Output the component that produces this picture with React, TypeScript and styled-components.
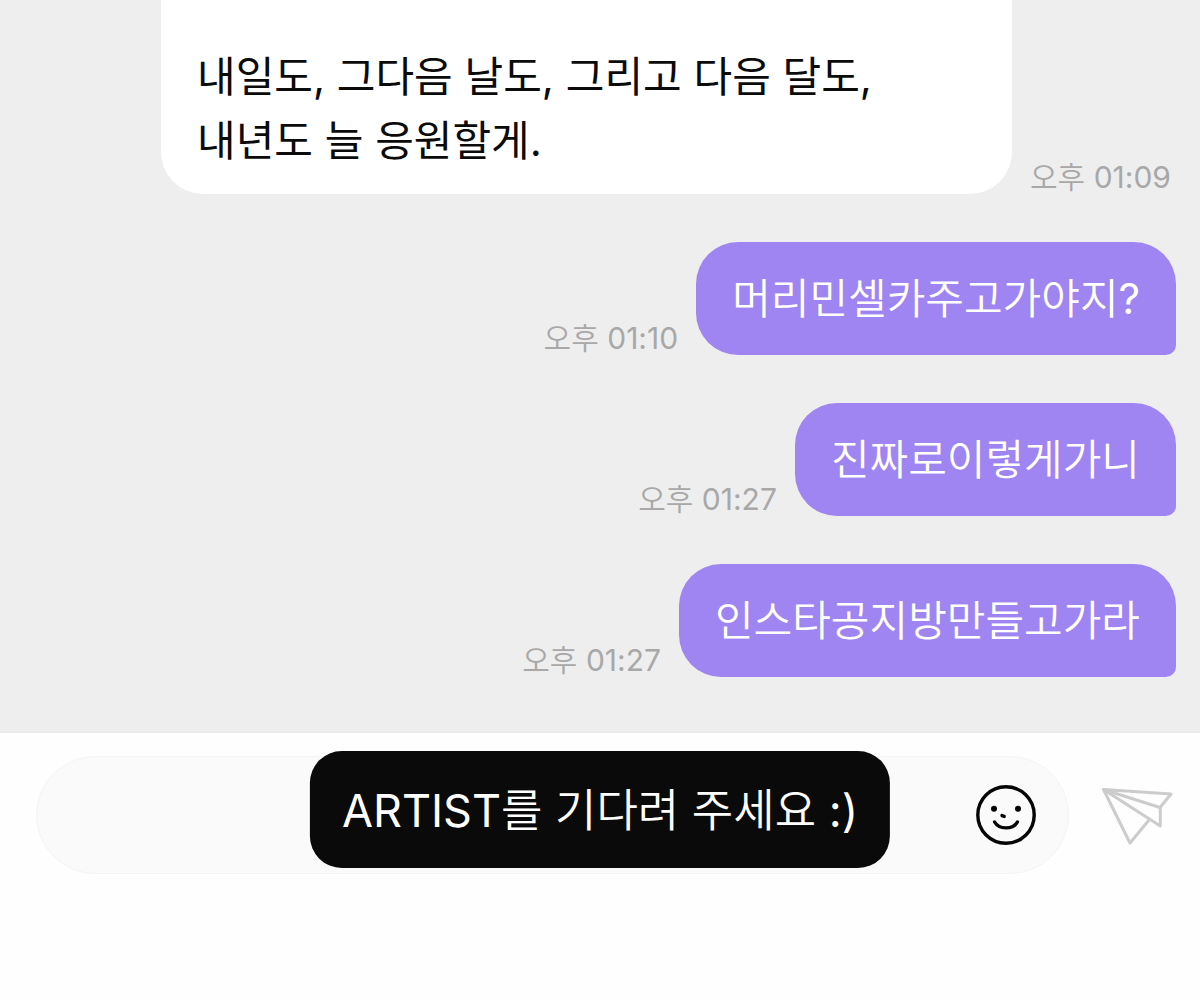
import React from "react";
import styled, { createGlobalStyle } from "styled-components";

const lightHangul = `Inter, "Noto Sans CJK KR DemiLight", "Noto Sans CJK KR", sans-serif`;

const Global = createGlobalStyle`
  *, *::before, *::after { box-sizing: border-box; }
  body {
    margin: 0;
    background: #fefefe;
    font-family: Inter, "Noto Sans CJK KR", sans-serif;
  }
`;

const Page = styled.div`
  display: flex;
  flex-direction: column;
  min-height: 100vh;
`;

const Thread = styled.main`
  display: flex;
  flex-direction: column;
  gap: 48px;
  padding: 0 24px 54px;
  background: #eeeeee;
  border-bottom: 2px solid #ebebeb;
`;

const Row = styled.div<{ $mine?: boolean }>`
  display: flex;
  align-items: flex-end;
  justify-content: ${(p) => (p.$mine ? "flex-end" : "flex-start")};
  gap: 18px;
  padding-left: ${(p) => (p.$mine ? "0" : "137px")};
`;

const Bubble = styled.p<{ $mine?: boolean }>`
  margin: 0;
  font-family: ${(p) => (p.$mine ? lightHangul : "inherit")};
  font-size: 42px;
  line-height: 64px;
  color: ${(p) => (p.$mine ? "#ffffff" : "#0b0b0b")};
  background: ${(p) => (p.$mine ? "#9f85f2" : "#ffffff")};
  border-radius: ${(p) => (p.$mine ? "42px 42px 10px 42px" : "0 0 42px 42px")};
  padding: ${(p) => (p.$mine ? "25px 36px 24px" : "45px 36px 21px")};
  flex: ${(p) => (p.$mine ? "0 1 auto" : "0 1 851px")};
`;

const Time = styled.time`
  flex: none;
  font-family: ${lightHangul};
  font-size: 30px;
  line-height: 34px;
  color: #a8a8a8;
`;

const Composer = styled.form`
  display: flex;
  align-items: center;
  gap: 32px;
  padding: 23px 27px 0 36px;
`;

const Field = styled.div`
  flex: 1;
  display: flex;
  align-items: center;
  height: 118px;
  padding: 0 32px;
  border: 1px solid #f4f4f4;
  border-radius: 59px;
  background: #fafafa;
`;

const Input = styled.input`
  flex: 1;
  min-width: 0;
  height: 100%;
  border: 0;
  outline: 0;
  background: transparent;
  font: inherit;
  font-size: 42px;
`;

const IconButton = styled.button`
  display: flex;
  flex: none;
  padding: 0;
  border: 0;
  background: none;
  color: inherit;
`;

const Dock = styled.footer`
  position: relative;
`;

const Toast = styled.div`
  position: absolute;
  top: 18px;
  left: 50%;
  transform: translateX(-50%);
  padding: 28px 32px 25px;
  border-radius: 32px;
  background: #0a0a0a;
  color: #ffffff;
  font-family: ${lightHangul};
  font-size: 45px;
  line-height: 64px;
  white-space: nowrap;
`;

const messages = [
  { text: "머리민셀카주고가야지?", time: "오후 01:10" },
  { text: "진짜로이렇게가니", time: "오후 01:27" },
  { text: "인스타공지방만들고가라", time: "오후 01:27" },
];

export default function App() {
  return (
    <Page>
      <Global />
      <Thread>
        <Row>
          <Bubble>
            내일도, 그다음 날도, 그리고 다음 달도,
            <br />
            내년도 늘 응원할게.
          </Bubble>
          <Time>오후 01:09</Time>
        </Row>
        {messages.map((m) => (
          <Row $mine key={m.text}>
            <Time>{m.time}</Time>
            <Bubble $mine>{m.text}</Bubble>
          </Row>
        ))}
      </Thread>
      <Dock>
        <Composer>
          <Field>
            <Input type="text" aria-label="메시지" />
            <IconButton type="button" aria-label="이모티콘">
              <svg width="60" height="60" viewBox="0 0 60 60" fill="none" stroke="#050505" strokeWidth="3.4" strokeLinecap="round">
                <circle cx="30" cy="30" r="28.2" />
                <path d="M18.6 37C23 44.8 37 44.8 41.4 37" />
                <path d="M26 30.6 28.2 31.4" />
                <circle cx="18" cy="23.8" r="3" fill="#050505" stroke="none" />
                <circle cx="42" cy="23.8" r="3" fill="#050505" stroke="none" />
              </svg>
            </IconButton>
          </Field>
          <IconButton type="button" aria-label="보내기">
            <svg width="72" height="60" viewBox="0 0 72 60" fill="none" stroke="#cccccc" strokeWidth="3" strokeLinejoin="round" strokeLinecap="round">
              <path d="M2.5 4.5 70 9 59 22.5Z" />
              <path d="M2.5 4.5 59.3 41V22.5" />
              <path d="M2.5 4.5 29 58 48 35" />
            </svg>
          </IconButton>
        </Composer>
        <Toast role="status">ARTIST를 기다려 주세요 :)</Toast>
      </Dock>
    </Page>
  );
}
